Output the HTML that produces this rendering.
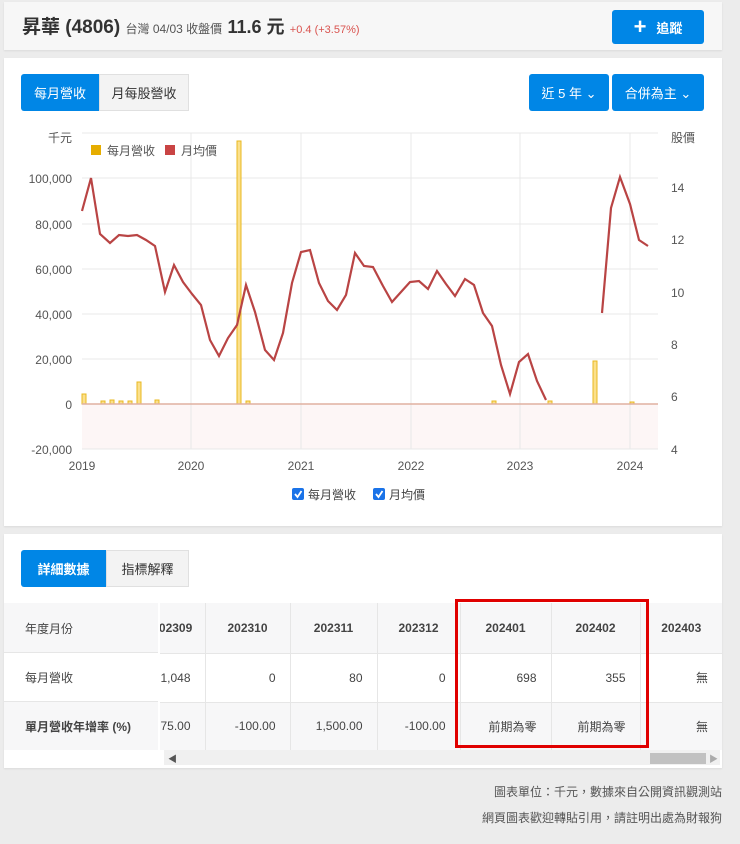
<!DOCTYPE html>
<html><head><meta charset="utf-8"><style>
*{box-sizing:border-box;margin:0;padding:0}
body{width:740px;height:844px;background:#ececec;font-family:"Liberation Sans","Noto Sans CJK TC",sans-serif;color:#333;position:relative;overflow:hidden}
.card{position:absolute;background:#fff;box-shadow:0 1px 2px rgba(0,0,0,.08)}
.btn{position:absolute;background:#0086e6;color:#fff;font-size:13px;display:flex;align-items:center;justify-content:center;border-radius:3px}
.gbtn{position:absolute;background:#f3f3f3;color:#333;font-size:13px;display:flex;align-items:center;justify-content:center;border:1px solid #e0e0e0}
.t{position:absolute;font-size:12px;color:#555}
table{border-collapse:collapse;table-layout:fixed;position:absolute;font-size:13px}
td{border-right:1px solid #e6e6e6;border-bottom:1px solid #e6e6e6;text-align:right;padding-right:14px;color:#444;overflow:hidden;white-space:nowrap}
tr.h td{text-align:center;padding-right:0}
</style></head><body>
<div class="card" style="left:4px;top:2px;width:718px;height:48px;background:#f7f7f7"></div>
<div style="position:absolute;left:22px;top:12px;font-size:19px;color:#333;font-weight:bold;white-space:nowrap">昇華 (4806) <span style="font-size:12px;color:#555;font-weight:normal">台灣 04/03 收盤價</span> <span style="font-size:18px">11.6 元</span> <span style="font-size:11px;color:#d9534f;font-weight:normal">+0.4 (+3.57%)</span></div>
<div class="btn" style="left:612px;top:10px;width:92px;height:34px;font-weight:bold"><span style="font-size:22px;margin-right:10px">+</span>追蹤</div>

<div class="card" style="left:4px;top:58px;width:718px;height:468px"></div>
<div class="btn" style="left:21px;top:74px;width:78px;height:37px;border-radius:3px 0 0 3px">每月營收</div>
<div class="gbtn" style="left:99px;top:74px;width:90px;height:37px">月每股營收</div>
<div class="btn" style="left:529px;top:74px;width:80px;height:37px">近 5 年 ⌄</div>
<div class="btn" style="left:612px;top:74px;width:92px;height:37px">合併為主 ⌄</div>

<svg style="position:absolute;left:0;top:0" width="740" height="520">
<rect x="82" y="404" width="576" height="45" fill="#fdf6f6"/>
<g stroke="#e8e8e8" stroke-width="1">
<line x1="82" y1="133" x2="658" y2="133"/><line x1="82" y1="178" x2="658" y2="178"/><line x1="82" y1="224" x2="658" y2="224"/><line x1="82" y1="269" x2="658" y2="269"/><line x1="82" y1="314" x2="658" y2="314"/><line x1="82" y1="359" x2="658" y2="359"/><line x1="82" y1="449" x2="658" y2="449"/>
<line x1="191" y1="133" x2="191" y2="449"/><line x1="301" y1="133" x2="301" y2="449"/><line x1="411" y1="133" x2="411" y2="449"/><line x1="520" y1="133" x2="520" y2="449"/><line x1="630" y1="133" x2="630" y2="449"/>
</g>
<g fill="#fbe08c" stroke="#e8b820" stroke-width="1">
<rect x="82" y="394" width="4" height="10"/><rect x="101" y="401" width="4" height="3"/><rect x="110" y="400" width="4" height="4"/><rect x="119" y="401" width="4" height="3"/><rect x="128" y="401" width="4" height="3"/><rect x="137" y="382" width="4" height="22"/><rect x="155" y="400" width="4" height="4"/><rect x="237" y="141" width="4" height="263"/><rect x="246" y="401" width="4" height="3"/><rect x="492" y="401" width="4" height="3"/><rect x="548" y="401" width="4" height="3"/><rect x="593" y="361" width="4" height="43"/><rect x="630" y="402" width="4" height="2"/>
</g>
<line x1="82" y1="404" x2="658" y2="404" stroke="#e0b0a0" stroke-width="1.5"/>
<polyline fill="none" stroke="#b94444" stroke-width="2.2" points="82,211 91,178 100,234 110,243 119,235 128,236 137,235 146,240 155,246 165,292 174,265 183,282 192,294 201,305 210,340 219,356 228,338 237,325 246,285 255,312 265,350 274,360 283,333 292,283 301,252 310,250 319,283 328,301 337,310 346,295 355,253 364,266 373,267 383,286 392,302 401,292 410,282 419,281 428,289 437,271 446,284 455,296 465,279 474,285 483,313 492,326 501,365 510,394 519,362 528,354 537,381 546,400"/>
<polyline fill="none" stroke="#b94444" stroke-width="2.2" points="602,313 611,208 620,177 630,204 639,240 648,246"/>
<rect x="91" y="145" width="10" height="10" fill="#e6ad00"/><text x="107" y="155" font-size="12" fill="#555">每月營收</text>
<rect x="165" y="145" width="10" height="10" fill="#c94444"/><text x="181" y="155" font-size="12" fill="#555">月均價</text>
<g font-size="12" fill="#555" text-anchor="end">
<text x="72" y="142">千元</text><text x="72" y="183">100,000</text><text x="72" y="229">80,000</text><text x="72" y="274">60,000</text><text x="72" y="319">40,000</text><text x="72" y="364">20,000</text><text x="72" y="409">0</text><text x="72" y="454">-20,000</text>
</g>
<g font-size="12" fill="#555">
<text x="671" y="142">股價</text><text x="671" y="192">14</text><text x="671" y="244">12</text><text x="671" y="297">10</text><text x="671" y="349">8</text><text x="671" y="401">6</text><text x="671" y="454">4</text>
</g>
<g font-size="12" fill="#555" text-anchor="middle">
<text x="82" y="470">2019</text><text x="191" y="470">2020</text><text x="301" y="470">2021</text><text x="411" y="470">2022</text><text x="520" y="470">2023</text><text x="630" y="470">2024</text>
</g>
<rect x="292" y="488" width="12" height="12" rx="2" fill="#1a73e8"/><path d="M295 494 l2.5 3 l4-6" stroke="#fff" stroke-width="1.8" fill="none"/>
<text x="308" y="499" font-size="12" fill="#444">每月營收</text>
<rect x="373" y="488" width="12" height="12" rx="2" fill="#1a73e8"/><path d="M376 494 l2.5 3 l4-6" stroke="#fff" stroke-width="1.8" fill="none"/>
<text x="389" y="499" font-size="12" fill="#444">月均價</text>
</svg>

<div class="card" style="left:4px;top:534px;width:718px;height:234px"></div>
<div class="btn" style="left:21px;top:550px;width:85px;height:37px;font-weight:bold;border-radius:3px 0 0 3px">詳細數據</div>
<div class="gbtn" style="left:106px;top:550px;width:83px;height:37px">指標解釋</div>

<div style="position:absolute;left:160px;top:603px;width:562px;height:147px;overflow:hidden">
<table style="top:0;left:-20px;width:582px;font-size:12px">
<colgroup><col style="width:65px"><col style="width:85px"><col style="width:87px"><col style="width:83px"><col style="width:91px"><col style="width:89px"><col style="width:82px"></colgroup>
<tr class="h" style="height:50px;background:#f7f7f8;font-weight:bold"><td>202309</td><td>202310</td><td>202311</td><td>202312</td><td>202401</td><td>202402</td><td style="border-right:none">202403</td></tr>
<tr style="height:49px"><td>1,048</td><td>0</td><td>80</td><td>0</td><td>698</td><td>355</td><td style="border-right:none">無</td></tr>
<tr style="height:48px;background:#f7f7f8"><td>75.00</td><td>-100.00</td><td>1,500.00</td><td>-100.00</td><td>前期為零</td><td>前期為零</td><td style="border-right:none">無</td></tr>
</table></div>
<div style="position:absolute;left:4px;top:603px;width:154px;height:147px;font-size:12px;color:#444">
<div style="height:50px;background:#f7f7f8;border-bottom:1px solid #e6e6e6;padding:17px 0 0 21px">年度月份</div>
<div style="height:49px;border-bottom:1px solid #e6e6e6;padding:16px 0 0 21px">每月營收</div>
<div style="height:48px;background:#f7f7f8;padding:16px 0 0 21px;font-weight:bold;color:#444">單月營收年增率 (%)</div>
</div>
<div style="position:absolute;left:164px;top:750px;width:556px;height:15px;background:#f0f0f0"></div>
<div style="position:absolute;left:168px;top:752px;font-size:9px;color:#555">◀</div>
<div style="position:absolute;left:650px;top:753px;width:56px;height:11px;background:#c1c1c1"></div>
<div style="position:absolute;left:709px;top:752px;font-size:9px;color:#aaa">▶</div>
<div style="position:absolute;left:455px;top:599px;width:194px;height:149px;border:3px solid #e00000"></div>

<div class="t" style="right:18px;top:783px;font-size:12px">圖表單位：千元，數據來自公開資訊觀測站</div>
<div class="t" style="right:18px;top:809px;font-size:12px">網頁圖表歡迎轉貼引用，請註明出處為財報狗</div>
</body></html>
